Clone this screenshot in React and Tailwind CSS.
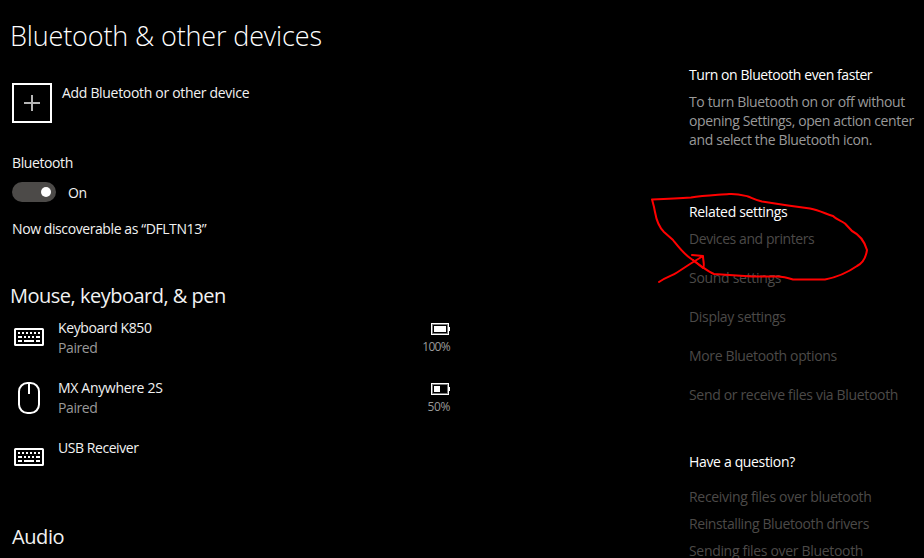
function KeyboardIcon() {
  return (
    <svg width="30" height="18" viewBox="0 0 30 18" className="block">
      <rect x="1" y="1" width="28" height="16" rx="0.6" fill="none" stroke="#fff" strokeWidth="2" />
      <path
        fill="#fff"
        d="M4 4h2v2H4zM8 4h2v2H8zM12 4h2v2h-2zM16 4h2v2h-2zM20 4h2v2h-2zM24 4h2v2h-2zM4 8h4v2H4zM10 8h2v2h-2zM14 8h2v2h-2zM18 8h2v2h-2zM22 8h4v2h-4zM4 12h4v2H4zM10 12h10v2H10zM22 12h4v2h-4z"
      />
    </svg>
  );
}

function MouseIcon() {
  return (
    <svg width="22" height="32" viewBox="0 0 22 32" className="mt-0.5 block">
      <rect x="1" y="1" width="20" height="30" rx="8.5" fill="none" stroke="#fff" strokeWidth="2" />
      <path d="M11 1v11" stroke="#fff" strokeWidth="2" />
    </svg>
  );
}

function BatteryIcon({ level }) {
  return (
    <svg width="19" height="12" viewBox="0 0 19 12" shapeRendering="crispEdges" className="block">
      <rect x="0.5" y="0.5" width="17" height="11" fill="none" stroke="#fff" />
      <rect x="1.5" y="1.5" width="15" height="9" fill="none" stroke="#777" />
      <rect x="18" y="4" width="1" height="4" fill="#fff" />
      <rect x="3" y="3" width={(12 * level) / 100} height="6" fill="#fff" />
    </svg>
  );
}

function Device({ icon, name, nameClass, status, level, levelClass }) {
  return (
    <div className="flex h-[60px]">
      <div className="flex h-[38px] w-[34px] items-center justify-center">{icon}</div>
      <div className="ml-3 flex-1">
        <div className={nameClass}>{name}</div>
        {status && <div className="tracking-[-0.4px] text-[#999]">{status}</div>}
      </div>
      {level && (
        <div className="flex flex-col items-end pt-[5px]">
          <BatteryIcon level={level} />
          <div className={`mt-[3px] text-[12px] leading-[18px] text-[#999] ${levelClass}`}>{level}%</div>
        </div>
      )}
    </div>
  );
}

export default function App() {
  return (
    <div className="relative flex h-[558px] w-[924px] overflow-hidden bg-black font-['Open_Sans','Noto_Sans',sans-serif] text-[14px] leading-[20px] whitespace-nowrap text-[#f2f2f2]">
      <main className="w-[450px] pl-3">
        <h1 className="-ml-[2px] pt-[18px] text-[27px] leading-[36px] font-light tracking-[-0.15px] text-white">
          Bluetooth &amp; other devices
        </h1>
        <div className="mt-[29px] flex">
          <div className="flex size-10 items-center justify-center border-2 border-white">
            <svg width="16" height="16" viewBox="0 0 16 16" shapeRendering="crispEdges">
              <path d="M8 0v16M0 8h16" stroke="#b5b5b5" strokeWidth="2" />
            </svg>
          </div>
          <div className="ml-[10px] tracking-[-0.31px]">Add Bluetooth or other device</div>
        </div>
        <div className="mt-[30px] tracking-[-0.4px]">Bluetooth</div>
        <div className="mt-[9px] flex h-5">
          <div className="flex h-5 w-11 items-center justify-end rounded-full bg-[#4c4a48] pr-[5px]">
            <div className="size-[10px] rounded-full bg-white" />
          </div>
          <div className="ml-3 pt-px tracking-[-0.3px]">On</div>
        </div>
        <div className="mt-[17px] tracking-[-0.41px]">Now discoverable as “DFLTN13”</div>
        <h2 className="-ml-[2px] mt-[43px] text-[20px] leading-[28px] tracking-[-0.5px]">Mouse, keyboard, &amp; pen</h2>
        <div className="mt-[8px]">
          <Device icon={<KeyboardIcon />} name="Keyboard K850" nameClass="tracking-[-0.4px]" status="Paired" level={100} levelClass="tracking-[-0.7px]" />
          <Device icon={<MouseIcon />} name="MX Anywhere 2S" nameClass="tracking-[-0.32px]" status="Paired" level={50} levelClass="tracking-[-0.4px]" />
          <Device icon={<KeyboardIcon />} name="USB Receiver" nameClass="tracking-[-0.44px]" />
        </div>
        <h2 className="mt-[25px] text-[20px] leading-[28px] tracking-[-0.4px]">Audio</h2>
      </main>
      <aside className="ml-[239px] w-[235px] pt-[65px] text-[#4c4a48]">
        <h3 className="tracking-[-0.43px] text-white">Turn on Bluetooth even faster</h3>
        <div className="mt-[7px] leading-[19px] text-[#999]">
          <div className="tracking-[-0.38px]">To turn Bluetooth on or off without</div>
          <div className="tracking-[-0.38px]">opening Settings, open action center</div>
          <div className="tracking-[-0.36px]">and select the Bluetooth icon.</div>
        </div>
        <h3 className="mt-[53px] tracking-[-0.34px] text-white">Related settings</h3>
        <div className="mt-[7px] flex flex-col gap-[19px]">
          <div className="tracking-[-0.42px]">Devices and printers</div>
          <div className="tracking-[-0.3px]">Sound settings</div>
          <div className="tracking-[-0.32px]">Display settings</div>
          <div className="tracking-[-0.35px]">More Bluetooth options</div>
          <div className="tracking-[-0.33px]">Send or receive files via Bluetooth</div>
        </div>
        <h3 className="mt-[47px] tracking-[-0.34px] text-white">Have a question?</h3>
        <div className="mt-[15px] flex flex-col gap-[7px]">
          <div className="tracking-[-0.3px]">Receiving files over bluetooth</div>
          <div className="tracking-[-0.39px]">Reinstalling Bluetooth drivers</div>
          <div className="tracking-[-0.32px]">Sending files over Bluetooth</div>
        </div>
      </aside>
      <svg className="pointer-events-none absolute inset-0" width="924" height="558" viewBox="0 0 924 558" fill="none" stroke="#ff0000" strokeWidth="2" strokeLinecap="round" strokeLinejoin="round">
        <path d="M652 199.500C666 199 678 198.500 691 197.500C704 195.500 718 195 729 194C738 193.500 742 195 748 196.500C752 198 755 200 762 201.500L788 205.500L810 208.500C820 210.500 826 214 833 216C837 220 840 220 845 223.500L852 231C860 235 865 243 867 250C866 257 863 263 857 266C847 273 838 277 825 279.500H793C787 277.500 784 276.500 777 276.500H752L714 274C709 272 704 268 701 266L690 258C683 253 677 245 673 240L664 232C659 227 656 218 655 212C654 206 653 203 652 199.500Z" />
        <path d="M659 282C668 276 672 276 677 272.500L690 264L703 256M692 255L703 256C703 261 705 266 703 268L693 260" />
      </svg>
    </div>
  );
}
